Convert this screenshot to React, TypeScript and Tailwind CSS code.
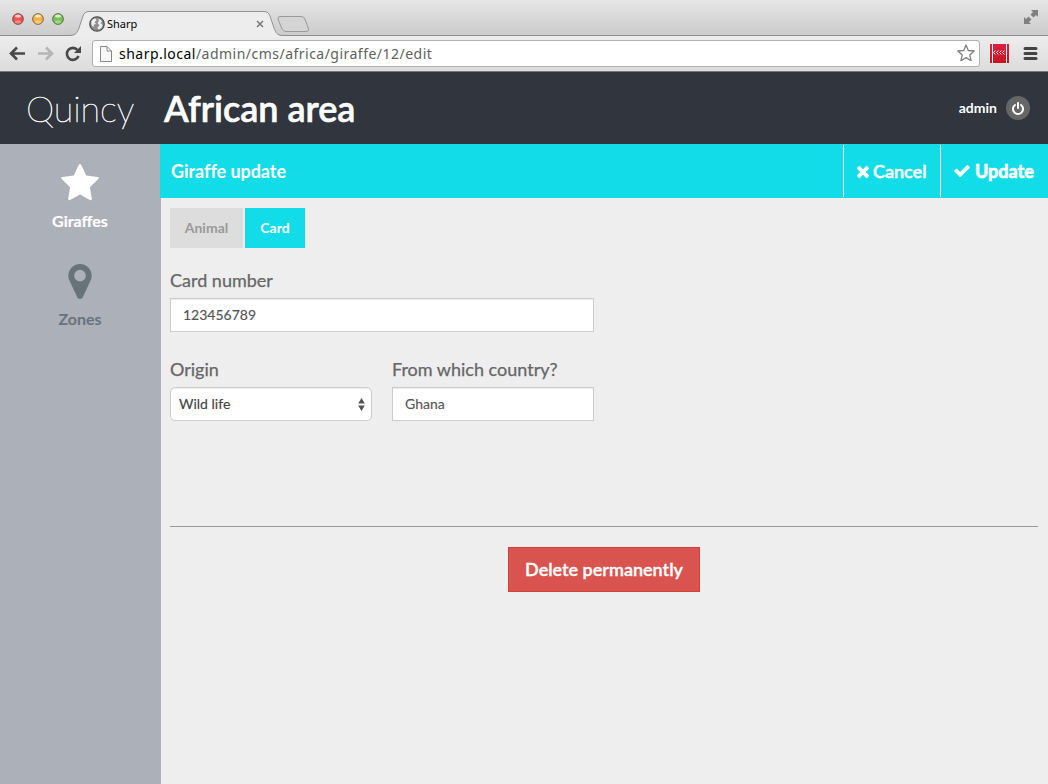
import type { ReactNode } from "react";

function Light({ color }: { color: string }) {
  return (
    <svg className="block size-3" viewBox="0 0 12 12">
      <circle cx="6" cy="6" r="5.4" fill={color} stroke="#000" strokeOpacity=".45" strokeWidth="1" />
      <ellipse cx="6" cy="3" rx="3" ry="1.6" fill="#fff" opacity=".7" />
      <ellipse cx="6" cy="9" rx="3.200" ry="1.700" fill="#fff" opacity=".3" />
    </svg>
  );
}

function TabStrip() {
  return (
    <div className="relative h-9 bg-linear-to-b from-[#e6e6e6] to-[#cbcbcb]">
      <svg className="absolute inset-0" width="1048" height="36">
        <path d="M0 35.500H1048" stroke="#8e8e8e" />
        <path d="M70 36C76 35 77 33 79 28L83 16Q84.500 11.500 89 11.500H264Q268.500 11.500 270 16L274 28C276 33 277 35 282 36Z" fill="#ededed" />
        <path d="M70 35.500C76 35 77 33 79 28L83 16Q84.500 11.500 89 11.500H264Q268.500 11.500 270 16L274 28C276 33 277 35 282 35.500" fill="none" stroke="#929292" />
        <path d="M280 16.500H301Q304 16.500 305 19L308.500 29Q309 31.500 306 31.500H286Q283.500 31.500 282 29L278 19Q277.500 16.500 280 16.500Z" fill="#d4d4d4" stroke="#999" />
        <path d="M257 21L263 27M263 21L257 27" stroke="#777" strokeWidth="1.500" />
        <g fill="#808080">
          <path d="M1031 10H1038V17L1036 15L1033.500 17.500L1030.500 14.500L1033 12Z" />
          <path d="M1024 17L1026 19L1028.500 16.500L1031.500 19.500L1029 22L1031 24H1024Z" />
        </g>
      </svg>
      <div className="relative flex h-full items-start">
        <div className="flex gap-2 pt-[13px] pl-3">
          <Light color="#ee5350" />
          <Light color="#f5b13d" />
          <Light color="#79c353" />
        </div>
        <div className="flex items-center pt-4 pl-[25px]">
          <svg className="size-4" viewBox="0 0 16 16">
            <circle cx="8" cy="8" r="7.200" fill="#8f8f8f" stroke="#505050" strokeWidth="1.300" />
            <path d="M2.500 5Q4 2 6.500 2.500L7.500 4.500L5.500 6L7 8L5 8.500L4.500 11Q1.500 9 2.500 5ZM9 3Q12 3 13 5.500L11.500 7L13.500 9Q13 12.500 9.500 13.500L8.500 11.500L10.500 9.500L8.500 7L10 5Z" fill="#efefef" />
          </svg>
          <span className="ml-[2px] font-['Noto_Sans'] text-[11px] leading-4 text-black">Sharp</span>
        </div>
      </div>
    </div>
  );
}

function Toolbar() {
  return (
    <div className="flex h-9 items-center border-b border-[#777] bg-linear-to-b from-[#ededed] to-[#dcdcdc] pb-px">
      <svg className="shrink-0" width="92" height="34" viewBox="0 36 92 34" fill="none">
        <path d="M25 53.500H12M17 47.500L11 53.500L17 59.500" stroke="#484848" strokeWidth="2.600" />
        <path d="M38 53.500H51M46 47.500L52 53.500L46 59.500" stroke="#b5b5b5" strokeWidth="2.600" />
        <path d="M77.500 50A6 6 0 1 0 78.500 56" stroke="#484848" strokeWidth="2.600" />
        <path d="M81 46V53H74Z" fill="#484848" />
      </svg>
      <div className="flex h-[27px] w-[888px] items-center rounded-[3px] border border-[#b0b0b0] bg-white pr-1">
        <svg className="mt-px ml-[7px] shrink-0" width="12" height="16" viewBox="0 0 12 16">
          <path d="M.5 .5H7L11.500 5V15.500H.5ZM7 .5V5H11.500" fill="#f7f7f7" stroke="#888" />
        </svg>
        <span className="mt-[2px] ml-[7px] flex-1 font-['Noto_Sans'] text-[14px] leading-5 tracking-[0.48px] text-[#606060]">
          <span className="text-black">sharp.local</span>/admin/cms/africa/giraffe/12/edit
        </span>
        <svg width="18" height="18" viewBox="0 0 18 18">
          <path d="M9 1L11.300 6.500L17.200 7L12.700 10.900L14.100 16.700L9 13.600L3.900 16.700L5.300 10.900L.8 7L6.700 6.500Z" fill="#fff" stroke="#808080" strokeWidth="1.300" strokeLinejoin="round" />
        </svg>
      </div>
      <svg className="shrink-0" width="68" height="34" viewBox="980 36 68 34">
        <defs>
          <linearGradient id="extension" x1="0" y1="0" x2="0" y2="1">
            <stop offset="0" stopColor="#e01f47" />
            <stop offset="1" stopColor="#c8151c" />
          </linearGradient>
        </defs>
        <rect x="990" y="44" width="19" height="19" fill="url(#extension)" />
        <path d="M992.500 44V63M1006.500 44V63" stroke="#fff" />
        <path d="M995.500 50.500L993.500 52.500L995.500 54.500M998.500 50.500L996.500 52.500L998.500 54.500M1001.500 50.500L999.500 52.500L1001.500 54.500M1004.500 50.500L1002.500 52.500L1004.500 54.500" fill="none" stroke="#fff" strokeWidth=".9" />
        <path d="M1025 48.500H1036M1025 53.500H1036M1025 58.500H1036" stroke="#444" strokeWidth="3" strokeLinecap="round" />
      </svg>
    </div>
  );
}

function Field({ label, className, children }: { label: string; className: string; children: ReactNode }) {
  return (
    <label className={className}>
      <span className="block h-[27px] text-[18px] leading-[19px] text-[#666] [-webkit-text-stroke:0.25px]">{label}</span>
      {children}
    </label>
  );
}

const inputClass =
  "block h-[34px] w-full border border-[#ccc] bg-white px-3 pb-[2px] text-[14px] text-[#555] [-webkit-text-stroke:0.15px] shadow-[inset_0_1px_1px_rgba(0,0,0,0.075)] outline-none";

export default function App() {
  return (
    <div className="flex h-[784px] w-[1048px] flex-col overflow-hidden bg-[#eee] font-['Lato',sans-serif]">
      <TabStrip />
      <Toolbar />
      <header className="flex h-[72px] shrink-0 items-center bg-[#31353d] text-white">
        <h1 className="w-[164px] pl-[26px] text-[36px] leading-none font-extralight tracking-[-0.1px] [-webkit-text-stroke:0.5px]">Quincy</h1>
        <h2 className="flex-1 text-[36px] leading-none font-semibold [-webkit-text-stroke:0.6px]">African area</h2>
        <span className="pb-px text-[14px] font-bold">admin</span>
        <span className="mr-[18px] ml-[9px] flex size-6 items-center justify-center rounded-full bg-[#666]">
          <svg width="12" height="13" viewBox="128 0 1536 1664" fill="#fff">
            <path d="M1664 896q0 156-61 298t-164 245-245 164-298 61-298-61-245-164-164-245-61-298q0-182 80.500-343t226.500-270q43-32 95.500-25t83.500 50q32 42 24.500 94.500t-49.500 84.500q-98 74-151.500 181t-53.500 228q0 104 40.500 198.500t109.500 163.500 163.500 109.500 198.500 40.500 198.500-40.500 163.500-109.500 109.500-163.500 40.500-198.500q0-121-53.500-228t-151.500-181q-42-32-49.500-84.500t24.500-94.500q31-43 84-50t95 25q146 109 226.500 270t80.500 343zm-640-768v640q0 52-38 90t-90 38-90-38-38-90v-640q0-52 38-90t90-38 90 38 38 90z" />
          </svg>
        </span>
      </header>
      <div className="flex flex-1">
        <nav className="w-[160px] shrink-0 bg-[#acb0b9] text-center text-[16px] font-bold">
          <a className="flex h-[98px] flex-col items-center pt-5 text-white">
            <svg width="38" height="37" viewBox="0 0 38 37" fill="currentColor">
              <path d="M19 0Q19.800 0 20.300 1L25.200 11.400L36.500 13Q37.800 13.200 37.800 14Q37.800 14.600 37 15.300L28.900 23.300L30.800 34.600Q31 36.200 29.900 36.200Q29.500 36.200 29 35.900L19 30.500L9 35.900Q8.500 36.200 8.100 36.200Q7 36.200 7.200 34.600L9.100 23.300L1 15.300Q.2 14.600 .2 14Q.2 13.200 1.500 13L12.800 11.400L17.700 1Q18.200 0 19 0Z" />
            </svg>
            <span className="mt-[10px] leading-5 [-webkit-text-stroke:0.2px]">Giraffes</span>
          </a>
          <a className="flex h-[98px] flex-col items-center pt-[22px] text-[#68727b]">
            <svg width="24" height="35" viewBox="384 128 1024 1536" fill="currentColor">
              <path d="M1152 640q0-106-75-181t-181-75-181 75-75 181 75 181 181 75 181-75 75-181zm256 0q0 109-33 179l-364 774q-16 33-47.500 52t-67.500 19-67.500-19-46.500-52l-365-774q-33-70-33-179 0-212 150-362t362-150 362 150 150 362z" />
            </svg>
            <span className="mt-[10px] leading-5">Zones</span>
          </a>
        </nav>
        <main className="flex flex-1 flex-col">
          <div className="flex h-[54px] items-stretch bg-[#13dce9] text-[18px] font-bold text-white">
            <h3 className="flex flex-1 items-center pl-[11px] tracking-[-0.05px]">Giraffe update</h3>
            <button className="my-px flex w-[97px] items-center border-l border-white pl-[13px] font-semibold [-webkit-text-stroke:0.45px]">
              <svg className="mt-px mr-[4px]" width="12" height="12" viewBox="110 366 1188 1188" fill="#fff">
                <path d="M1298 1322q0 40-28 68l-136 136q-28 28-68 28t-68-28l-294-294-294 294q-28 28-68 28t-68-28l-136-136q-28-28-28-68t28-68l294-294-294-294q-28-28-28-68t28-68l136-136q28-28 68-28t68 28l294 294 294-294q28-28 68-28t68 28l136 136q28 28 28 68t-28 68l-294 294 294 294q28 28 28 68z" />
              </svg>
              Cancel
            </button>
            <button className="my-px flex w-[108px] items-center border-l border-white pl-[13px] font-bold [-webkit-text-stroke:0.7px]">
              <svg className="mr-[5px]" width="16" height="12" viewBox="121 334 1550 1188" fill="#fff">
                <path d="M1671 566q0 40-28 68l-724 724-136 136q-28 28-68 28t-68-28l-136-136-362-362q-28-28-28-68t28-68l136-136q28-28 68-28t68 28l294 295 656-657q28-28 68-28t68 28l136 136q28 28 28 68z" />
              </svg>
              Update
            </button>
          </div>
          <div className="flex-1 border-l border-[#acb0b9] pt-[10px] pr-[10px] pl-[9px]">
            <div className="flex gap-[2px] text-[14px] font-bold">
              <button className="h-10 w-[73px] bg-[#ddd] pb-[2px] text-[#999]">Animal</button>
              <button className="h-10 w-[60px] bg-[#13dce9] pb-[2px] text-white">Card</button>
            </div>
            <div className="mt-[23px] flex w-[424px] flex-wrap gap-x-5 gap-y-7">
              <Field label="Card number" className="w-[424px]">
                <input className={inputClass} defaultValue="123456789" />
              </Field>
              <Field label="Origin" className="w-[202px]">
                <span className="flex h-[34px] items-center justify-between rounded-[5px] border border-[#ccc] bg-white pr-[6px] pl-2 text-[14px] text-[#444] shadow-[inset_0_1px_1px_rgba(0,0,0,0.075)]">
                  <span className="pb-[2px] [-webkit-text-stroke:0.15px]">Wild life</span>
                  <svg width="7" height="13" viewBox="0 0 7 13" fill="#555">
                    <path d="M3.500 0L6.800 5.500H.2ZM3.500 13L.2 7.500H6.800Z" />
                  </svg>
                </span>
              </Field>
              <Field label="From which country?" className="w-[202px]">
                <input className={inputClass} defaultValue="Ghana" />
              </Field>
            </div>
            <div className="mt-[105px] border-t border-[#999] pt-5 text-center">
              <button className="h-[45px] w-[192px] border border-[#d43f3a] bg-[#d9534f] text-[18px] font-semibold text-white [-webkit-text-stroke:0.35px]">
                Delete permanently
              </button>
            </div>
          </div>
        </main>
      </div>
    </div>
  );
}
